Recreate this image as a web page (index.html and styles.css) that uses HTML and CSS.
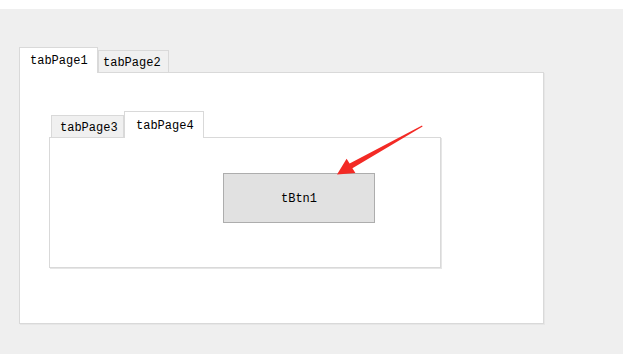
FILE: index.html
```html
<!DOCTYPE html>
<html lang="en">
<head>
    <meta charset="UTF-8">
    <title>TabControl Demo</title>
    <link rel="stylesheet" href="styles.css">
</head>
<body>
    <div class="form">
        <div class="tab-control outer">
            <div class="tab-strip">
                <div class="tab active tab-1">tabPage1</div>
                <div class="tab tab-2">tabPage2</div>
            </div>
            <div class="tab-panel outer-panel">
                <div class="tab-control inner">
                    <div class="tab-strip inner-strip">
                        <div class="tab tab-3">tabPage3</div>
                        <div class="tab active tab-4">tabPage4</div>
                    </div>
                    <div class="tab-panel inner-panel">
                        <button class="win-btn">tBtn1</button>
                    </div>
                </div>
            </div>
        </div>

        <!-- red annotation arrow pointing at the button -->
        <svg class="arrow" width="623" height="354" viewBox="0 0 623 354">
            <polygon points="422,125.4 349.6,163.6 346.6,158.8 337,174.5 355.4,173 352.4,168.2 422.6,126.6" fill="#f32a25"/>
        </svg>
    </div>
</body>
</html>
```

FILE: styles.css
```css
* {
    margin: 0;
    padding: 0;
    box-sizing: border-box;
}

body {
    background-color: #fff;
    font-family: "Liberation Mono", "DejaVu Sans Mono", monospace;
    font-size: 12px;
    color: #000;
    position: relative;
    height: 354px;
    overflow: hidden;
}

.form {
    margin-top: 9px;
    height: 345px;
    background-color: #efefef;
    padding: 38px 0 0 19px;
}

.tab-control.outer {
    width: 525px;
}

.tab-strip {
    display: flex;
    align-items: flex-end;
}

.tab {
    flex-shrink: 0;
    white-space: nowrap;
    height: 22px;
    padding-top: 1px;
    line-height: 22px;
    background-color: #f0f0f0;
    border: 1px solid #d9d9d9;
    border-bottom: none;
}

.tab.active {
    height: 26px;
    padding-top: 1px;
    line-height: 24px;
    background-color: #fff;
    margin-bottom: -1px;
    position: relative;
    z-index: 1;
}

.tab-1 {
    width: 79px;
    padding-left: 10px;
}

.tab-2 {
    width: 71px;
    padding-left: 4px;
}

.tab-3 {
    width: 73px;
    padding-left: 8px;
}

.tab-4 {
    width: 80px;
    padding-left: 11px;
}

.tab-panel {
    background-color: #fff;
    border: 1px solid #d9d9d9;
    box-shadow: 1px 1px 0 #e6e6e6;
}

.outer-panel {
    height: 252px;
    padding: 38px 0 0 29px;
}

.tab-control.inner {
    width: 392px;
}

.inner-strip {
    padding-left: 2px;
}

.inner-strip .tab-4 {
    height: 27px;
    padding-top: 2px;
}

.inner-panel {
    height: 131px;
    padding: 35px 0 0 173px;
}

.win-btn {
    display: block;
    width: 152px;
    height: 50px;
    padding-top: 1px;
    background-color: #e1e1e1;
    border: 1px solid #adadad;
    font-family: inherit;
    font-size: 12px;
    color: #000;
}

.arrow {
    position: absolute;
    left: 0;
    top: 0;
    pointer-events: none;
}
```
